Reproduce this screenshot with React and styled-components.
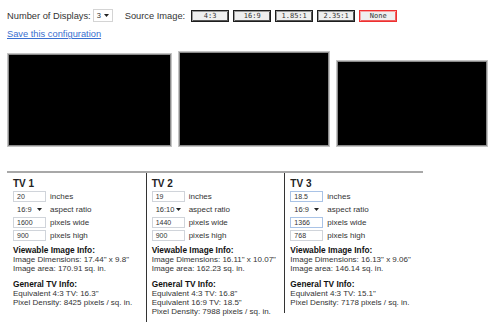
import React from "react";
import styled, { createGlobalStyle } from "styled-components";

const Global = createGlobalStyle`
  html, body { margin: 0; padding: 0; background: #fff; }
  body { font-family: "Liberation Sans", Arial, sans-serif; color: #222; }
`;

const Page = styled.div`
  padding: 9px 0 0 7px;
  width: 493px;
`;

const Header = styled.div`
  display: flex;
  align-items: center;
  height: 13px;
  font-size: 9.3px;
  color: #333;
`;

const Label = styled.span`
  white-space: nowrap;
  margin-left: ${(p) => p.$ml || 0}px;
`;

const MiniSelect = styled.div`
  display: flex;
  align-items: center;
  justify-content: space-between;
  box-sizing: border-box;
  width: ${(p) => p.$w}px;
  height: ${(p) => p.$h}px;
  margin-left: ${(p) => p.$ml || 0}px;
  margin-right: ${(p) => p.$mr || 0}px;
  padding: 0 3px 0 3px;
  border: ${(p) => (p.$bordered ? "1px solid #d4d4d4" : "1px solid transparent")};
  font-size: 7.5px;
  color: #333;
  background: #fff;
`;

const Arrow = () => (
  <svg width="5" height="3" viewBox="0 0 5 3">
    <path d="M0 0 L5 0 L2.5 3 Z" fill="#222" />
  </svg>
);

const Btn = styled.div`
  box-sizing: border-box;
  width: 38px;
  height: 12px;
  margin-left: ${(p) => p.$ml}px;
  display: flex;
  align-items: center;
  justify-content: center;
  font-family: "DejaVu Sans Mono", monospace;
  font-size: 7px;
  color: #333;
  background: #efefef;
  border: 1px solid ${(p) => (p.$active ? "#ee3030" : "#1e1e1e")};
  box-shadow: inset 1px 1px 0 ${(p) => (p.$active ? "#f6a6a6" : "#9a9a9a")},
    inset -1px -1px 0 ${(p) => (p.$active ? "#f06060" : "#555")};
`;

const SaveLink = styled.a`
  display: block;
  margin-top: 7px;
  font-size: 9.3px;
  line-height: 11px;
  color: #3a6fd0;
  text-decoration: underline;
  width: max-content;
`;

const Screens = styled.div`
  display: flex;
  align-items: flex-end;
  gap: 6px;
  margin-top: 11px;
`;

const Screen = styled.div`
  box-sizing: border-box;
  background: #000;
  border: 1px solid #c4c4c4;
  box-shadow: inset 0 0 0 1px #8a8a8a;
`;

const Table = styled.div`
  display: flex;
  align-items: flex-start;
  width: 416px;
  margin-top: 24px;
  border-top: 2px solid #a8a8a8;
`;

const Col = styled.div`
  flex: 1;
  box-sizing: border-box;
  padding: 5px 0 6px ${(p) => (p.$first ? 6 : 5)}px;
  border-left: ${(p) => (p.$first ? "none" : "1px solid #333")};
`;

const ColTitle = styled.div`
  font-size: 10px;
  line-height: 11px;
  font-weight: bold;
  color: #222;
  margin-bottom: 2px;
`;

const Fields = styled.div`
  display: flex;
  flex-direction: column;
  gap: 2px;
`;

const Field = styled.div`
  display: flex;
  align-items: center;
  height: 11px;
  font-size: 8px;
  color: #333;
`;

const Input = styled.div`
  box-sizing: border-box;
  width: 33px;
  height: 11px;
  border: 1px solid ${(p) => (p.$focus ? "#a9c3e6" : "#d0d4da")};
  padding-left: 3px;
  font-size: 7px;
  line-height: 9px;
  color: #333;
  margin-right: 4px;
`;

const InfoBlock = styled.div`
  margin-top: ${(p) => p.$mt}px;
  font-size: 8px;
  line-height: 9px;
  color: #333;
`;

const InfoTitle = styled.div`
  font-weight: bold;
  font-size: 8.3px;
  color: #111;
`;

const tvs = [
  {
    name: "TV 1",
    inches: "20",
    ratio: "16:9",
    w: "1600",
    h: "900",
    dims: '17.44" x 9.8"',
    area: "170.91",
    general: ['Equivalent 4:3 TV: 16.3"'],
    density: "8425",
  },
  {
    name: "TV 2",
    inches: "19",
    ratio: "16:10",
    w: "1440",
    h: "900",
    dims: '16.11" x 10.07"',
    area: "162.23",
    general: ['Equivalent 4:3 TV: 16.8"', 'Equivalent 16:9 TV: 18.5"'],
    density: "7988",
  },
  {
    name: "TV 3",
    inches: "18.5",
    ratio: "16:9",
    w: "1366",
    h: "768",
    dims: '16.13" x 9.06"',
    area: "146.14",
    general: ['Equivalent 4:3 TV: 15.1"'],
    density: "7178",
    focus: true,
  },
];

const screens = [
  { w: 165, h: 94 },
  { w: 152, h: 96 },
  { w: 152, h: 87 },
];

const sources = ["4:3", "16:9", "1.85:1", "2.35:1", "None"];

export default function App() {
  return (
    <>
      <Global />
      <Page>
        <Header>
          <Label>Number of Displays:</Label>
          <MiniSelect $w={20} $h={13} $ml={2} $bordered>
            <span>3</span>
            <Arrow />
          </MiniSelect>
          <Label $ml={12}>Source Image:</Label>
          {sources.map((s, i) => (
            <Btn key={s} $ml={i === 0 ? 6 : 4} $active={s === "None"}>
              {s}
            </Btn>
          ))}
        </Header>
        <SaveLink href="#">Save this configuration</SaveLink>
        <Screens>
          {screens.map((s, i) => (
            <Screen key={i} style={{ width: s.w, height: s.h }} />
          ))}
        </Screens>
        <Table>
          {tvs.map((tv, i) => (
            <Col key={tv.name} $first={i === 0}>
              <ColTitle>{tv.name}</ColTitle>
              <Fields>
                <Field>
                  <Input $focus={tv.focus}>{tv.inches}</Input>inches
                </Field>
                <Field>
                  <MiniSelect $w={33} $h={11} $mr={4}>
                    <span>{tv.ratio}</span>
                    <Arrow />
                  </MiniSelect>
                  aspect ratio
                </Field>
                <Field>
                  <Input $focus={tv.focus}>{tv.w}</Input>pixels wide
                </Field>
                <Field>
                  <Input>{tv.h}</Input>pixels high
                </Field>
              </Fields>
              <InfoBlock $mt={5}>
                <InfoTitle>Viewable Image Info:</InfoTitle>
                <div>Image Dimensions: {tv.dims}</div>
                <div>Image area: {tv.area} sq. in.</div>
              </InfoBlock>
              <InfoBlock $mt={7}>
                <InfoTitle>General TV Info:</InfoTitle>
                {tv.general.map((g) => (
                  <div key={g}>{g}</div>
                ))}
                <div>Pixel Density: {tv.density} pixels / sq. in.</div>
              </InfoBlock>
            </Col>
          ))}
        </Table>
      </Page>
    </>
  );
}
